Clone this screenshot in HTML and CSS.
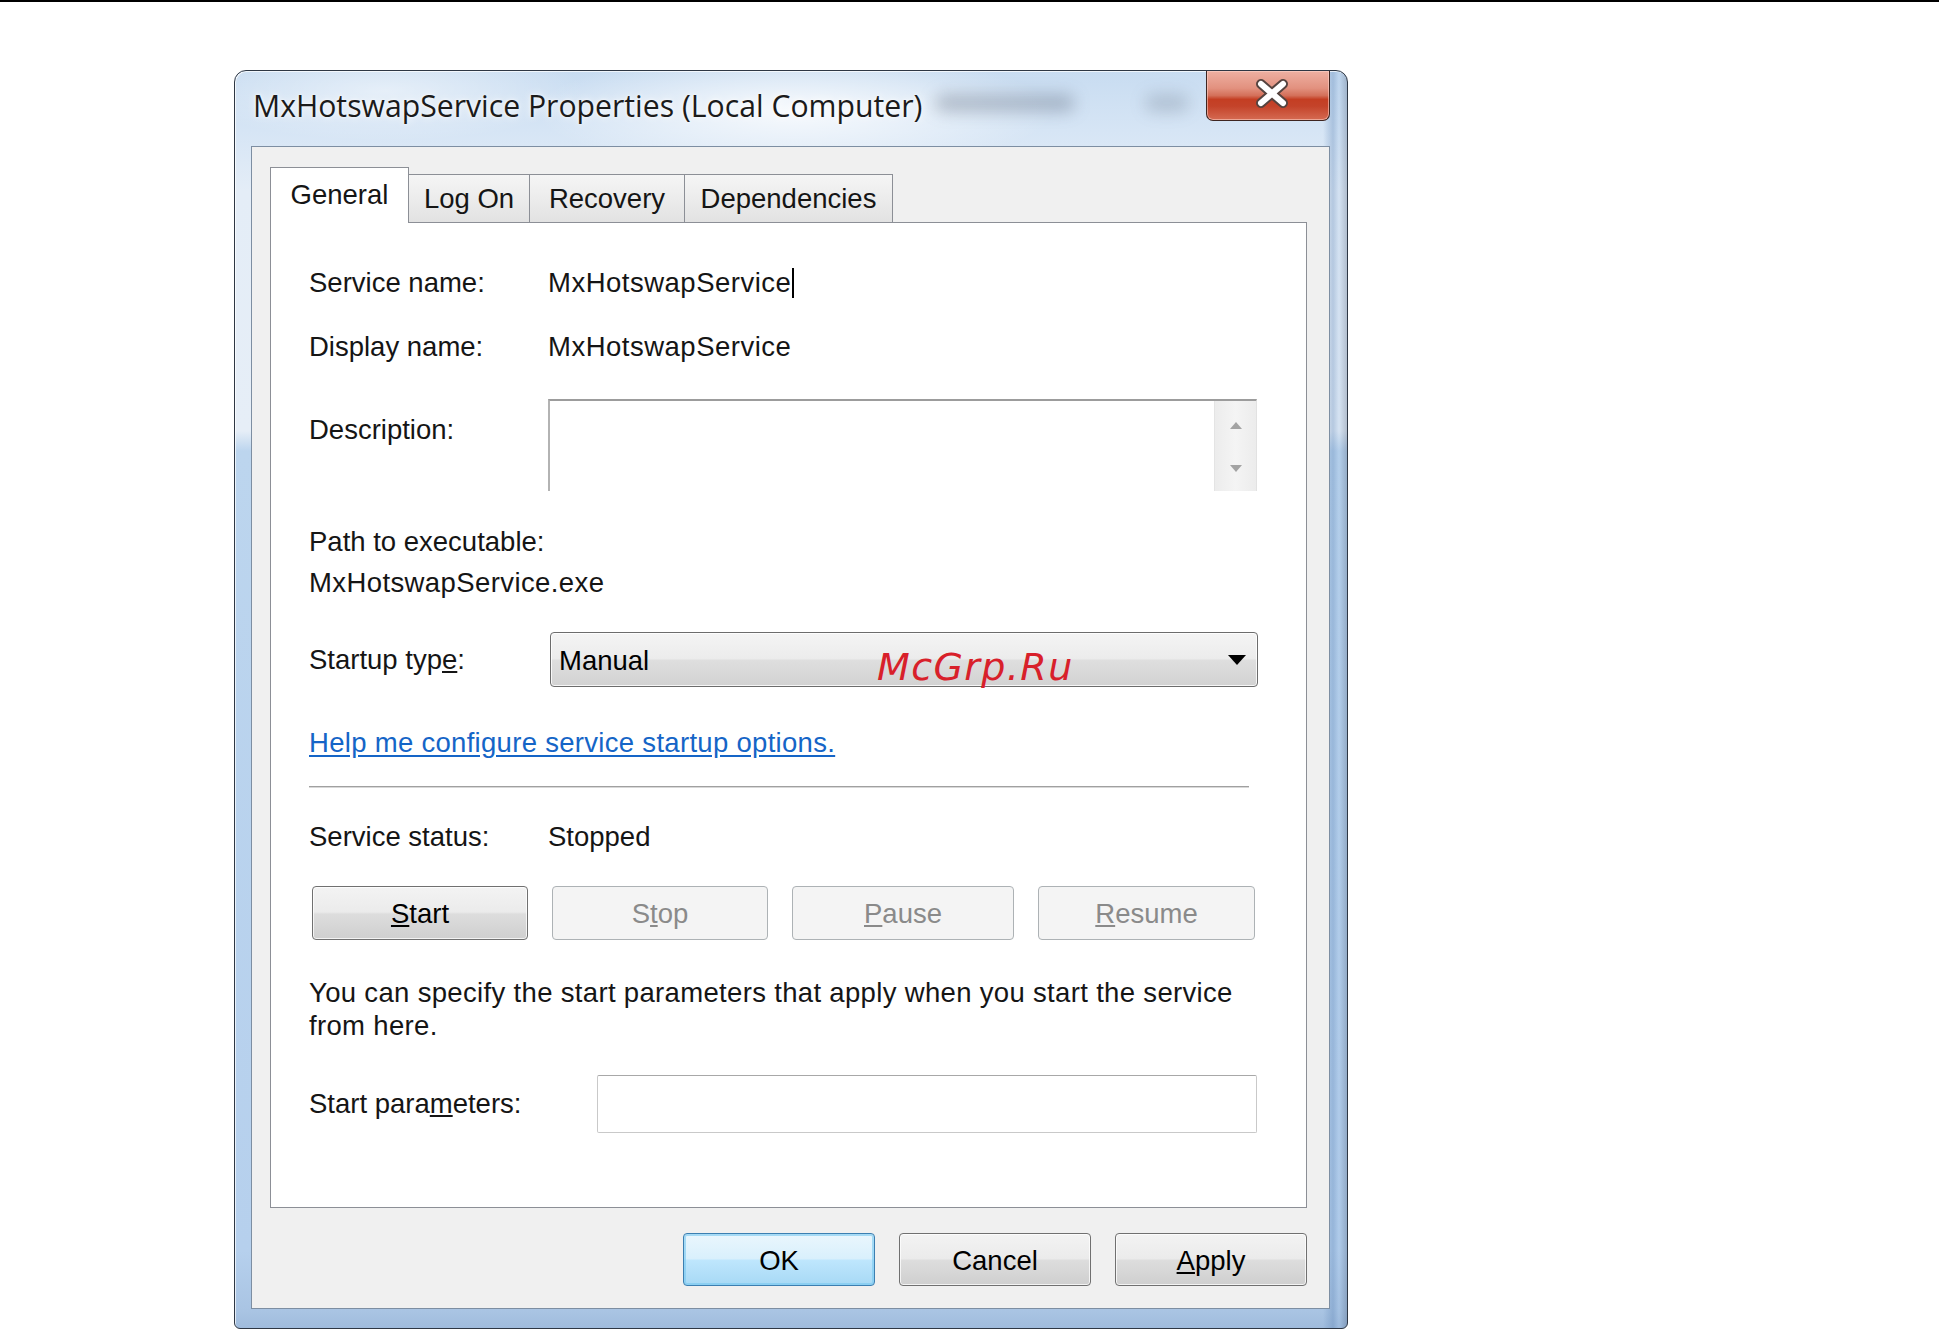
FILE: index.html
```html
<!DOCTYPE html>
<html lang="en">
<head>
<meta charset="utf-8">
<title>MxHotswapService Properties (Local Computer)</title>
<link rel="stylesheet" href="styles.css">
</head>
<body>
<div class="topline"></div>
<div class="window">
  <div class="titlebar">
    <div class="title">MxHotswapService Properties (Local Computer)</div>
    <div class="smudge smudge-a"></div>
    <div class="smudge smudge-b"></div>
    <div class="close">
      <svg width="124" height="50" viewBox="0 0 124 50">
        <path d="M54 13 L76 32 M76 13 L54 32" stroke="#55433f" stroke-width="10" stroke-linecap="round"/>
        <path d="M54 13 L76 32 M76 13 L54 32" stroke="#ffffff" stroke-width="6" stroke-linecap="round"/>
      </svg>
    </div>
  </div>
  <div class="client">
    <div class="tabs">
      <div class="tab tab-active">General</div>
      <div class="tab tab-logon">Log On</div>
      <div class="tab tab-recovery">Recovery</div>
      <div class="tab tab-deps">Dependencies</div>
    </div>
    <div class="panel">
      <div class="row row-first">
        <div class="label">Service name:</div>
        <div class="value value-name">MxHotswapService<span class="caret"></span></div>
      </div>
      <div class="row row-display">
        <div class="label">Display name:</div>
        <div class="value value-name">MxHotswapService</div>
      </div>
      <div class="row row-desc">
        <div class="label label-desc">Description:</div>
        <div class="desc-box">
          <div class="scrollbar">
            <svg width="42" height="90" viewBox="0 0 42 90">
              <polygon points="15,28 27,28 21,21" fill="#a3a3a3"/>
              <polygon points="15,64 27,64 21,71" fill="#a3a3a3"/>
            </svg>
          </div>
        </div>
      </div>
      <div class="line line-path">Path to executable:</div>
      <div class="line line-exe">MxHotswapService.exe</div>
      <div class="row row-startup">
        <div class="label">Startup typ<u>e</u>:</div>
        <div class="dropdown">
          <span class="dropdown-text">Manual</span>
          <svg class="dropdown-arrow" width="18" height="10" viewBox="0 0 18 10"><polygon points="0,0 18,0 9,10" fill="#000"/></svg>
          <span class="watermark">McGrp.Ru</span>
        </div>
      </div>
      <div class="line line-link"><a class="link" href="#">Help me configure service startup options.</a></div>
      <div class="separator"></div>
      <div class="row row-status">
        <div class="label">Service status:</div>
        <div class="value">Stopped</div>
      </div>
      <div class="svc-buttons">
        <div class="btn"><u>S</u>tart</div>
        <div class="btn btn-disabled">S<u>t</u>op</div>
        <div class="btn btn-disabled"><u>P</u>ause</div>
        <div class="btn btn-disabled"><u>R</u>esume</div>
      </div>
      <p class="para">You can specify the start parameters that apply when you start the service<br>from here.</p>
      <div class="row row-params">
        <div class="label label-params">Start para<u>m</u>eters:</div>
        <div class="params-input"></div>
      </div>
    </div>
    <div class="dlg-buttons">
      <div class="btn dlg-btn btn-default">OK</div>
      <div class="btn dlg-btn">Cancel</div>
      <div class="btn dlg-btn"><u>A</u>pply</div>
    </div>
  </div>
  <div class="bottomframe"></div>
</div>
</body>
</html>
```

FILE: styles.css
```css
* { box-sizing: border-box; }
html, body { margin: 0; padding: 0; background: #ffffff; }
body {
  width: 1939px;
  height: 1330px;
  overflow: hidden;
  font-family: "Liberation Sans", Arial, sans-serif;
  font-size: 27.5px;
  color: #151515;
}
.topline { height: 2px; background: #000; }

.window {
  margin: 68px 0 0 234px;
  width: 1114px;
  height: 1259px;
  border: 1px solid #2e3744;
  border-radius: 12px 12px 6px 6px;
  padding: 0 17px 0 16px;
  display: flex;
  flex-direction: column;
  background:
    linear-gradient(to right, rgba(255,255,255,0) 0, rgba(255,255,255,0) 1088px, rgba(90,130,180,0.35) 1098px, rgba(150,185,225,0.2) 1104px, rgba(60,80,110,0.3) 1112px),
    radial-gradient(ellipse 260px 60px at 560px 40px, rgba(255,255,255,0.85), rgba(255,255,255,0)),
    radial-gradient(ellipse 200px 50px at 150px 20px, rgba(255,255,255,0.5), rgba(255,255,255,0)),
    linear-gradient(to bottom, #c8dcf1 0, #d6e5f5 60px, #e4edf7 120px, #e6eef7 360px, #bcd5ee 380px, #b6d0ed 1180px, #a9c4e3 1240px, #9fbbdc 1259px);
  box-shadow: inset 1px 1px 0 rgba(255,255,255,0.7);
}

.titlebar {
  height: 75px;
  display: flex;
  align-items: flex-start;
}
.title {
  font-family: "Open Sans", "Noto Sans", sans-serif;
  font-size: 30.2px;
  line-height: 40px;
  margin: 15px 0 0 2px;
  color: #1b1b1b;
  text-shadow: 0 0 8px rgba(255,255,255,0.95), 0 0 3px rgba(255,255,255,0.9);
  white-space: nowrap;
}
.smudge {
  height: 18px;
  margin-top: 23px;
  background: rgba(70, 80, 100, 0.3);
  filter: blur(8px);
  border-radius: 9px;
}
.smudge-a { width: 140px; margin-left: 12px; }
.smudge-b { width: 44px; margin-left: 70px; background: rgba(70,80,100,0.22); }
.close {
  margin-left: auto;
  margin-top: 0;
  width: 124px;
  height: 50px;
  border: 1px solid #3e2520;
  border-top: none;
  border-radius: 0 0 7px 7px;
  background: linear-gradient(to bottom, #eeb0a2 0, #e2917f 35%, #d4705a 50%, #c43e23 58%, #c4432a 72%, #d56a52 100%);
  box-shadow: inset 0 0 0 1px rgba(255,215,205,0.55);
}
.close svg { display: block; }

.client {
  width: 1079px;
  height: 1163px;
  background: #f0f0f0;
  border: 1px solid #7d8ea2;
  padding: 20px 22px 22px 18px;
  display: flex;
  flex-direction: column;
}

.tabs {
  height: 55px;
  display: flex;
  align-items: flex-end;
  position: relative;
  z-index: 2;
}
.tab {
  height: 48px;
  border: 1px solid #8c8f96;
  border-bottom: none;
  background: linear-gradient(to bottom, #f5f5f5 0, #ececec 50%, #e2e2e2 100%);
  text-align: center;
  line-height: 32px;
  padding-top: 8px;
  margin-left: -1px;
  white-space: nowrap;
}
.tab-active {
  height: 56px;
  width: 139px;
  margin-left: 0;
  margin-bottom: -1px;
  background: #ffffff;
  padding-top: 11px;
  position: relative;
  z-index: 3;
}
.tab-logon { width: 122px; }
.tab-recovery { width: 156px; }
.tab-deps { width: 209px; }

.panel {
  width: 1037px;
  height: 986px;
  background: #ffffff;
  border: 1px solid #8c8f96;
  padding: 44px 0 0 38px;
  line-height: 32px;
}
.row { display: flex; align-items: flex-start; }
.label { width: 239px; flex: none; white-space: nowrap; }
.value { white-space: nowrap; }
.value-name { letter-spacing: 0.5px; }
.caret {
  display: inline-block;
  width: 2px;
  height: 30px;
  background: #000;
  vertical-align: -6px;
  margin-left: 1px;
}
.row-display { margin-top: 32px; }
.row-desc { margin-top: 36px; }
.label-desc { padding-top: 15px; }
.desc-box {
  width: 709px;
  height: 92px;
  background: #fff;
  border-top: 2px solid #9c9c9c;
  border-left: 2px solid #b3b3b3;
  border-right: 1px solid #e2e2e2;
  display: flex;
  justify-content: flex-end;
}
.scrollbar {
  width: 42px;
  height: 90px;
  background: linear-gradient(to right, #ececec, #f4f4f4 50%, #ececec);
  border-left: 1px solid #e4e4e4;
}
.scrollbar svg { display: block; }

.line { white-space: nowrap; }
.line-path { margin-top: 35px; }
.line-exe { margin-top: 9px; letter-spacing: 0.4px; }

.row-startup { margin-top: 33px; align-items: center; }
.dropdown {
  position: relative;
  width: 708px;
  height: 55px;
  margin-left: 2px;
  border: 1px solid #6c6c6c;
  border-radius: 4px;
  background: linear-gradient(to bottom, #f4f4f4 0, #ececec 48%, #dedede 52%, #d2d2d2 100%);
  box-shadow: inset 0 0 0 1px rgba(255,255,255,0.8);
  display: flex;
  align-items: center;
  justify-content: space-between;
  padding: 3px 11px 0 8px;
}
.dropdown-text { color: #000; }
.dropdown-arrow { display: block; margin-top: -3px; }
.watermark {
  position: absolute;
  left: 326px;
  top: 15px;
  font-family: "DejaVu Sans", sans-serif;
  font-style: italic;
  font-size: 38px;
  line-height: 38px;
  letter-spacing: 1.4px;
  color: #d8202a;
}

.line-link { margin-top: 40px; }
.link { color: #1565c7; text-decoration: underline; text-underline-offset: 3px; letter-spacing: 0.3px; }

.separator {
  width: 940px;
  height: 2px;
  margin-top: 27px;
  border-top: 1px solid #a0a0a0;
  border-bottom: 1px solid #d8d8d8;
}
.row-status { margin-top: 33px; }

.svc-buttons {
  margin: 33px 0 0 3px;
  display: grid;
  grid-template-columns: 216px 216px 222px 217px;
  column-gap: 24px;
}
.btn {
  height: 54px;
  border: 1px solid #707070;
  border-radius: 4px;
  background: linear-gradient(to bottom, #f3f3f3 0, #ebebeb 48%, #dddddd 52%, #cfcfcf 100%);
  box-shadow: inset 0 0 0 1px rgba(255,255,255,0.75);
  display: flex;
  align-items: center;
  justify-content: center;
  color: #000;
  white-space: nowrap;
  padding-top: 2px;
}
.btn-disabled {
  border-color: #adb2b5;
  background: #f4f4f4;
  box-shadow: none;
  color: #8a8a8a;
}

.para { margin: 36px 0 0 0; line-height: 33px; white-space: nowrap; letter-spacing: 0.33px; }

.row-params { margin-top: 33px; align-items: center; }
.label-params { width: 288px; }
.params-input {
  width: 660px;
  height: 58px;
  background: #fff;
  border: 1px solid #c9c9c9;
  border-top-color: #a8a8a8;
  border-radius: 2px;
}

.dlg-buttons {
  margin-top: 25px;
  display: flex;
  justify-content: flex-end;
  gap: 24px;
}
.dlg-btn { width: 192px; height: 53px; }
.btn-default {
  border-color: #3c7fb1;
  background: linear-gradient(to bottom, #eaf6fd 0, #d9f0fc 48%, #bee6fd 52%, #a7d9f5 100%);
  box-shadow: inset 0 0 0 2px rgba(120,200,240,0.6);
}

.bottomframe { height: 19px; }
```
